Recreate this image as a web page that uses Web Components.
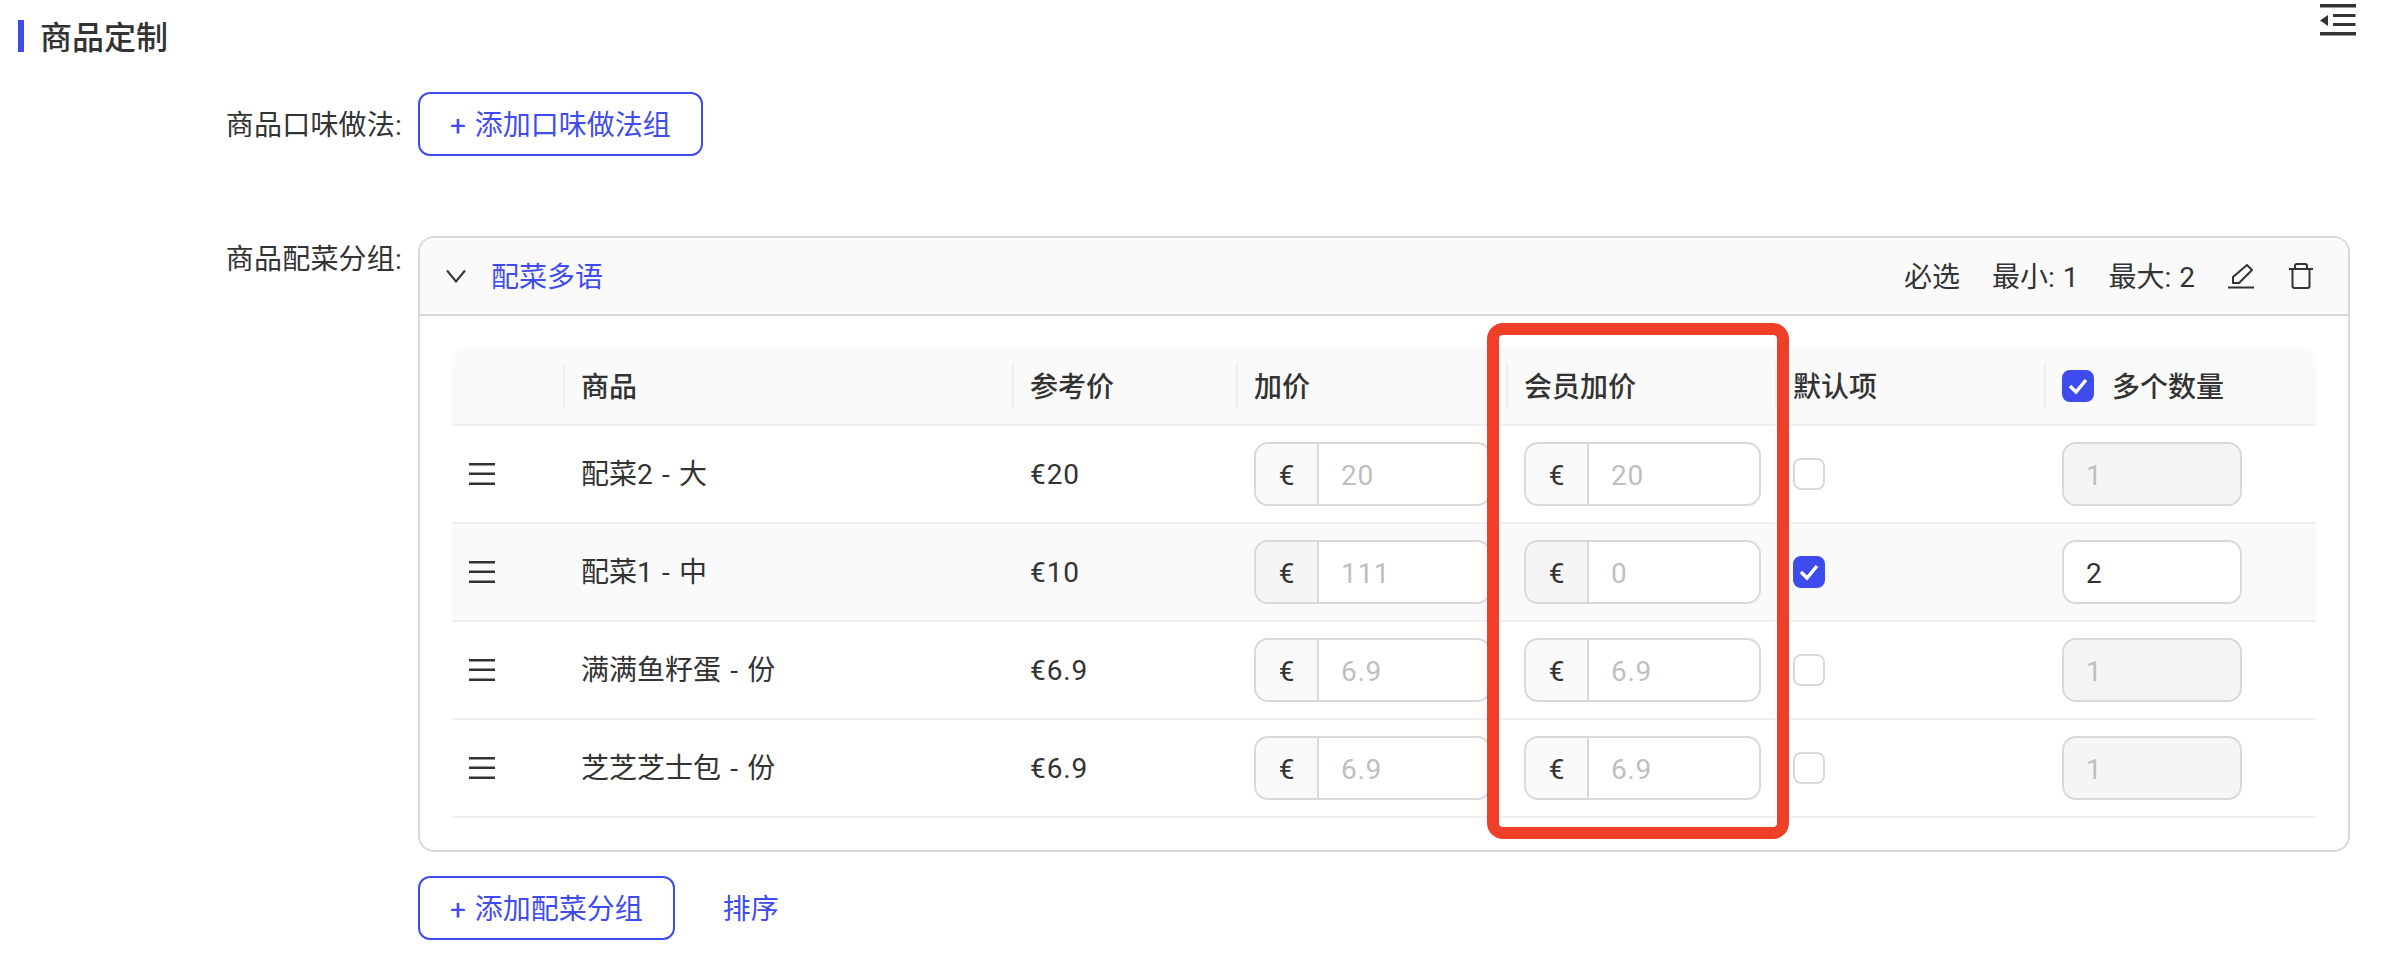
<!DOCTYPE html>
<html lang="zh">
<head>
<meta charset="utf-8">
<title>商品定制</title>
<style>
  html, body { margin: 0; background: #fff; }
  body {
    position: relative;
    font: 28px/40px Roboto, "Noto Sans CJK SC", sans-serif;
    color: #333;
    --blue: #3f4ced;
    --line: #d9d9d9;
    --soft: #f0f0f0;
    --cols: 111px 449px 224px 270px 269px 269px 272px;
  }
</style>
</head>
<body>
  <section-title>商品定制</section-title>
  <form-row label="商品口味做法:" style="margin-top:40px">
    <outline-button>+ 添加口味做法组</outline-button>
  </form-row>
  <form-row label="商品配菜分组:" style="margin-top:80px">
    <group-card name="配菜多语" min="1" max="2">
      <dish-head></dish-head>
      <dish-row name="配菜2 - 大" price="€20" add="20" member="20" qty="1"></dish-row>
      <dish-row name="配菜1 - 中" price="€10" add="111" member="0" qty="2" active></dish-row>
      <dish-row name="满满鱼籽蛋 - 份" price="€6.9" add="6.9" member="6.9" qty="1"></dish-row>
      <dish-row name="芝芝芝士包 - 份" price="€6.9" add="6.9" member="6.9" qty="1"></dish-row>
    </group-card>
  </form-row>
  <form-row style="margin-top:24px">
    <div style="display:flex;align-items:center;gap:48px">
      <outline-button>+ 添加配菜分组</outline-button>
      <span style="color:var(--blue);padding-top:3px">排序</span>
    </div>
  </form-row>
  <mark-box></mark-box>

<script>
class SectionTitle extends HTMLElement {
  constructor() {
    super()
    this.attachShadow({ mode: 'open' })
    this.shadowRoot.innerHTML = `
    <style>
      :host{ display:flex; justify-content:space-between; align-items:flex-start; padding:4px 30px 0 18px; }
      h2{
        box-sizing:border-box;
        height:32px;
        margin:16px 0 0;
        padding:2px 0 0 16px;
        border-left:6px solid var(--blue);
        font-size:32px;
        line-height:32px;
        font-weight:500;
      }
      svg{ display:block; }
    </style>
    <h2><slot></slot></h2>
    <svg width="36" height="32" viewBox="0 0 36 32" fill="#333">
      <path d="M0 0h36v3.500H0zM13 10h22.500v3H13zM13 19h22.500v3H13zM0 28h36v3.500H0zM0 16.500L8 11v11z"/>
    </svg>`
  }
}

class FormRow extends HTMLElement {
  constructor() {
    super()
    this.attachShadow({ mode: 'open' })
    this.shadowRoot.innerHTML = `
    <style>
      :host{ display:grid; grid-template-columns:400px 1fr; column-gap:18px; padding-right:36px; }
      .label{ text-align:right; white-space:nowrap; letter-spacing:.2px; margin-right:-2px; }
      :host([label="商品口味做法:"]) .label{ padding-top:14px; }
      :host([label="商品配菜分组:"]) .label{ padding-top:4px; }
      .body{ min-width:0; }
    </style>
    <div class="label">${this.getAttribute('label') || ''}</div>
    <div class="body"><slot></slot></div>`
  }
}

class OutlineButton extends HTMLElement {
  constructor() {
    super()
    this.attachShadow({ mode: 'open' })
    this.shadowRoot.innerHTML = `
    <style>
      :host{
        display:inline-flex; align-items:center; justify-content:center; box-sizing:border-box;
        height:64px; padding:3px 30px 0;
        border:2px solid var(--blue); border-radius:12px;
        color:var(--blue); white-space:nowrap; background:#fff;
        word-spacing:2px;
      }
    </style>
    <slot></slot>`
  }
}

class GroupCard extends HTMLElement {
  constructor() {
    super()
    this.attachShadow({ mode: 'open' })
    this.shadowRoot.innerHTML = `
    <style>
      :host{ display:block; border:2px solid var(--line); border-radius:16px; overflow:hidden; }
      header{
        display:flex; align-items:center; height:76px; box-sizing:content-box;
        padding:0 35px 0 26px; background:#fafafa; border-bottom:2px solid var(--line);
      }
      .name{ color:var(--blue); margin-left:25px; padding-top:3px; }
      .meta{ margin-left:auto; display:flex; align-items:center; }
      .meta span{ margin-right:33px; white-space:nowrap; padding-top:3px; word-spacing:1px; }
      .meta span:first-child{ margin-right:32px; }
      .meta span:nth-child(2){ margin-right:30px; }
      .trash{ margin-left:35px; }
      svg{ display:block; }
      .rows{ padding:32px; }
      .table{ border-radius:16px 16px 0 0; overflow:hidden; }
    </style>
    <header>
      <svg width="20" height="14" viewBox="0 0 20 14" fill="none" stroke="#333" stroke-width="2"><path d="M1 1.500l9 11 9-11"/></svg>
      <span class="name">${this.getAttribute('name')}</span>
      <div class="meta">
        <span>必选</span>
        <span>最小: ${this.getAttribute('min')}</span>
        <span>最大: ${this.getAttribute('max')}</span>
        <svg width="26" height="26" viewBox="0 0 26 26" fill="none" stroke="#333" stroke-width="2">
          <path d="M5 20v-6L19 2l5 5-13 13z" stroke-linejoin="round"/><path d="M0 24.500h26"/>
        </svg>
        <svg class="trash" width="24" height="26" viewBox="0 0 24 26" fill="none" stroke="#333" stroke-width="2">
          <path d="M0 6h24M3.500 6v17a2 2 0 0 0 2 2h13a2 2 0 0 0 2-2V6M6 6V3a2 2 0 0 1 2-2h8a2 2 0 0 1 2 2v3"/>
        </svg>
      </div>
    </header>
    <div class="rows"><div class="table"><slot></slot></div></div>`
  }
}

class TickBox extends HTMLElement {
  constructor() {
    super()
    this.attachShadow({ mode: 'open' })
    this.shadowRoot.innerHTML = `
    <style>
      :host{
        display:block; flex:none; box-sizing:border-box; width:32px; height:32px;
        border:2px solid var(--line); border-radius:8px; background:#fff;
      }
      :host([checked]){ border-color:var(--blue); background:var(--blue); }
      svg{ display:none; width:28px; height:28px; }
      :host([checked]) svg{ display:block; }
    </style>
    <svg viewBox="0 0 28 28" fill="none" stroke="#fff" stroke-width="3.500"><path d="M6 14l6 6 10-12"/></svg>`
  }
}

class PriceInput extends HTMLElement {
  constructor() {
    super()
    this.attachShadow({ mode: 'open' })
    this.shadowRoot.innerHTML = `
    <style>
      :host{
        display:flex; box-sizing:border-box; width:237px; height:64px;
        border:2px solid var(--line); border-radius:14px; overflow:hidden; background:#fff;
      }
      .unit{
        flex:none; width:61px; padding-top:3px; display:flex; align-items:center; justify-content:center;
        border-right:2px solid var(--line); background:rgba(0,0,0,.02);
      }
      :host([active]) .unit{ background:#f5f5f5; }
      .value{ flex:1; padding:3px 0 0 22px; display:flex; align-items:center; color:#bfbfbf; letter-spacing:.7px; }
    </style>
    <div class="unit">€</div>
    <div class="value">${this.getAttribute('value')}</div>`
  }
}

class QtyInput extends HTMLElement {
  constructor() {
    super()
    this.attachShadow({ mode: 'open' })
    this.shadowRoot.innerHTML = `
    <style>
      :host{
        display:flex; align-items:center; box-sizing:border-box; width:180px; height:64px; padding:3px 0 0 22px;
        border:2px solid var(--line); border-radius:14px; background:#f5f5f5; color:#bfbfbf;
      }
      :host([active]){ background:#fff; color:#333; }
    </style>
    <slot></slot>`
  }
}

class DishHead extends HTMLElement {
  constructor() {
    super()
    this.attachShadow({ mode: 'open' })
    this.shadowRoot.innerHTML = `
    <style>
      :host{
        display:grid; grid-template-columns:var(--cols); height:76px;
        background:#fafafa; border-bottom:2px solid var(--soft); font-weight:500;
      }
      div{ display:flex; align-items:center; position:relative; padding:3px 0 0 18px; white-space:nowrap; }
      div + div::before{
        content:""; position:absolute; left:0; top:15px; width:2px; height:45px; background:var(--soft);
      }
      tick-box{ margin:-3px 18px 0 0; }
    </style>
    <div></div>
    <div>商品</div>
    <div>参考价</div>
    <div>加价</div>
    <div>会员加价</div>
    <div>默认项</div>
    <div><tick-box checked></tick-box>多个数量</div>`
  }
}

class DishRow extends HTMLElement {
  constructor() {
    super()
    const on = this.hasAttribute('active') ? 'active' : ''
    this.attachShadow({ mode: 'open' })
    this.shadowRoot.innerHTML = `
    <style>
      :host{
        display:grid; grid-template-columns:var(--cols); height:96px;
        align-items:center; border-bottom:2px solid var(--soft);
      }
      :host([active]){ background:#fafafa; }
      div{ display:flex; align-items:center; padding-left:18px; white-space:nowrap; }
      .handle{ padding-left:17px; }
      .name{ word-spacing:2.300px; padding-top:2px; }
      .price{ letter-spacing:.9px; padding-top:2px; }
      svg{ display:block; }
    </style>
    <div class="handle">
      <svg width="26" height="22" viewBox="0 0 26 22" fill="#333"><path d="M0 0h26v2.500H0zM0 9.500h26V12H0zM0 19.500h26V22H0z"/></svg>
    </div>
    <div class="name">${this.getAttribute('name')}</div>
    <div class="price">${this.getAttribute('price')}</div>
    <div><price-input value="${this.getAttribute('add')}" ${on}></price-input></div>
    <div><price-input value="${this.getAttribute('member')}" ${on}></price-input></div>
    <div><tick-box ${on ? 'checked' : ''}></tick-box></div>
    <div><qty-input ${on}>${this.getAttribute('qty')}</qty-input></div>`
  }
}

// red annotation frame lying over the member price column
class MarkBox extends HTMLElement {
  constructor() {
    super()
    this.attachShadow({ mode: 'open' })
    this.shadowRoot.innerHTML = `
    <style>
      :host{
        position:absolute; left:1487px; top:323px; box-sizing:border-box; width:302px; height:516px;
        border:12px solid #ee4028; border-radius:16px; pointer-events:none;
      }
    </style>`
  }
}

customElements.define('section-title', SectionTitle)
customElements.define('form-row', FormRow)
customElements.define('outline-button', OutlineButton)
customElements.define('group-card', GroupCard)
customElements.define('tick-box', TickBox)
customElements.define('price-input', PriceInput)
customElements.define('qty-input', QtyInput)
customElements.define('dish-head', DishHead)
customElements.define('dish-row', DishRow)
customElements.define('mark-box', MarkBox)
</script>
</body>
</html>
